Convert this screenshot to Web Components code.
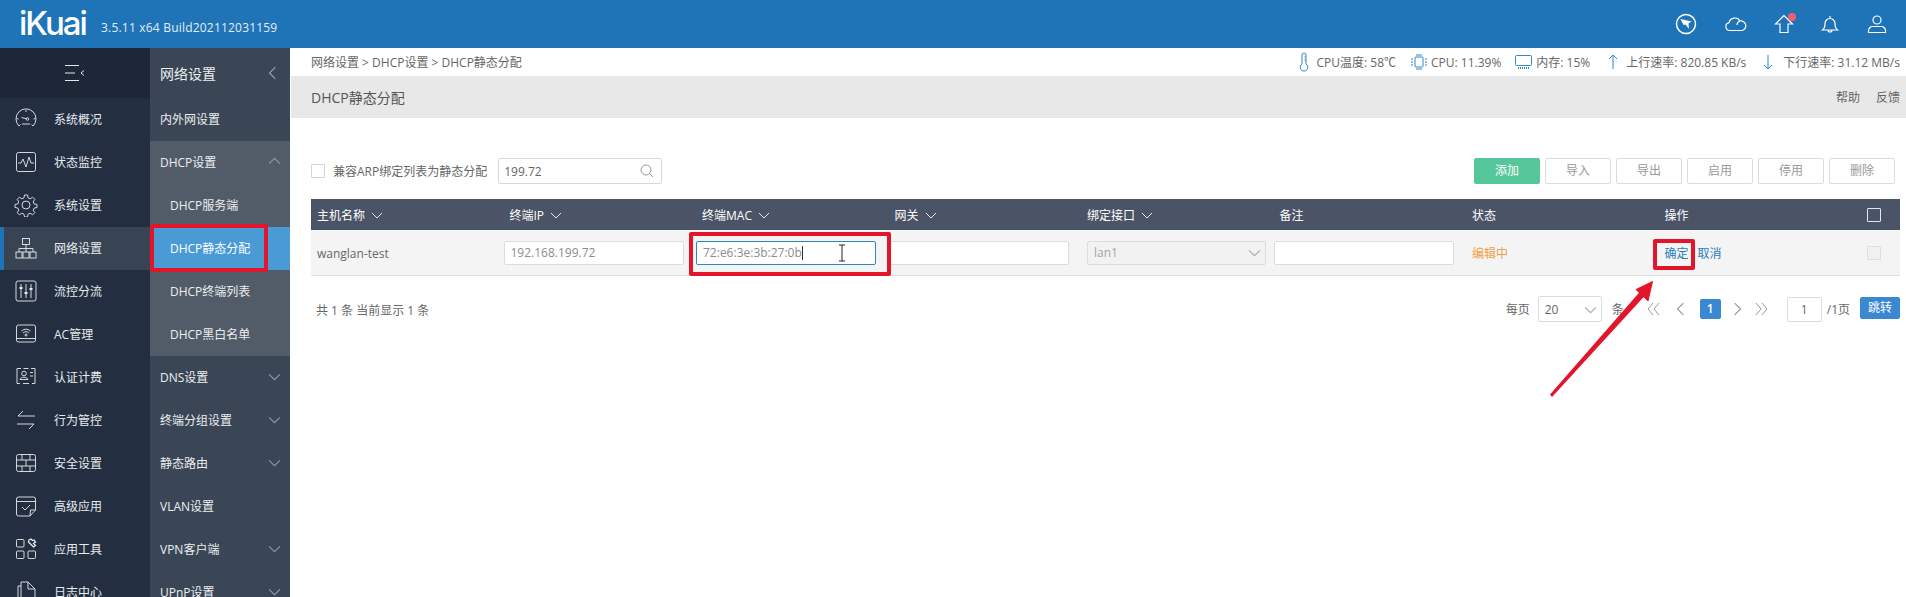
<!DOCTYPE html>
<html lang="zh">
<head>
<meta charset="utf-8">
<title>iKuai</title>
<style>
  html, body { margin: 0; height: 597px; overflow: hidden; background: #fff; }
  body { font: 12px "Open Sans", "Noto Sans CJK SC", sans-serif; color: #666; }
</style>
</head>
<body>
<ik-app>
  <ik-topbar version="3.5.11 x64 Build202112031159"></ik-topbar>
  <ik-sidenav></ik-sidenav>
  <ik-subnav></ik-subnav>
  <ik-main>
    <ik-status></ik-status>
    <ik-title>DHCP静态分配</ik-title>
    <ik-toolbar></ik-toolbar>
    <ik-table></ik-table>
    <ik-pager></ik-pager>
  </ik-main>
  <ik-mark style="left:150px;top:224px;width:118px;height:48px"></ik-mark>
  <ik-mark style="left:689px;top:232px;width:202px;height:44px"></ik-mark>
  <ik-mark style="left:1653px;top:239px;width:42px;height:31px"></ik-mark>
  <ik-arrow></ik-arrow>
</ik-app>

<script>
const chevron = (dir, size = 12, color = "currentColor") => {
  const d = { down: "M1 4l5 5 5-5", up: "M1 8l5-5 5 5", left: "M8 1L3 6l5 5", right: "M4 1l5 5-5 5" }[dir];
  return `<svg width="${size}" height="${size}" viewBox="0 0 12 12" fill="none" stroke="${color}" stroke-width="1"><path d="${d}"/></svg>`;
};

const NAV_ICONS = {
  gauge: `<path d="M5 19A10 10 0 1 1 19 19M5 19l1.500-1.500M19 19l-1.500-1.500M2.500 11.500l2 .5M21.500 11.500l-2 .5M12 3v2M8 17h8"/><circle cx="13.500" cy="12" r="1.300"/><path d="M7.500 10.500l4.800 1.200"/>`,
  pulse: `<rect x="2.500" y="2.500" width="19" height="19" rx="2"/><path d="M4 13h3l2-4 3 8 3-10 2 6h3"/>`,
  gear: `<circle cx="12" cy="12" r="4"/><path d="M10.500 2h3l.6 2.900 2 .9 2.500-1.600 2.200 2.200-1.600 2.500.9 2 2.900.6v3l-2.900.6-.9 2 1.600 2.500-2.200 2.200-2.500-1.600-2 .9-.6 2.900h-3l-.6-2.900-2-.9-2.500 1.600-2.200-2.200 1.600-2.500-.9-2-2.900-.6v-3l2.900-.6.9-2-1.600-2.500 2.200-2.200 2.500 1.600 2-.9z"/>`,
  tree: `<rect x="8.500" y="2.500" width="7" height="6"/><rect x="2" y="16" width="6" height="6"/><rect x="9" y="16" width="6" height="6"/><rect x="16" y="16" width="6" height="6"/><path d="M12 8.500V16M5 16v-3.500h14V16"/>`,
  sliders: `<rect x="2" y="2" width="20" height="20" rx="2"/><path d="M7 5v14M12 5v14M17 5v14"/><path d="M5.500 9h3M10.500 14h3M15.500 10h3" stroke-width="2"/>`,
  wifi: `<rect x="2.500" y="3" width="19" height="17" rx="2"/><path d="M2.500 16.500h19M7.500 9a6.500 6.500 0 0 1 9 0M9 11a4 4 0 0 1 6 0"/><circle cx="12" cy="13" r="1"/>`,
  card: `<path d="M7 3.500H3v15h3M9 18.500h6M18 18.500h3v-15h-4M9.500 3.500h5"/><circle cx="10" cy="8.500" r="2.300"/><path d="M6 14.500c.5-3 7-3 8 0h-8zM16 7.500h3M16 11h3"/>`,
  swap: `<path d="M21 8H4l5-5M3 16h17l-5 5"/>`,
  wall: `<rect x="2.500" y="3.500" width="19" height="17" rx="2"/><path d="M2.500 9h19M2.500 15h19M8 3.500V9M16 3.500V9M12 9v6M8 15v5.500M16 15v5.500"/>`,
  task: `<path d="M21.500 16V5a2 2 0 0 0-2-2h-15a2 2 0 0 0-2 2v15a2 2 0 0 0 2 2H16zM2.500 7.500h19M16 22l.5-6h5M8 13l3 3 5-5"/>`,
  tools: `<rect x="2.500" y="2.500" width="7.500" height="7.500" rx="1"/><rect x="2.500" y="14" width="7.500" height="7.500" rx="1"/><rect x="14" y="14" width="7.500" height="7.500" rx="1"/><path d="M15 3l2-1 1.500 1.500L20 3l1.500 2-2 1.500 2 2-2 1.500-3.500-3.500-1.500-1.500z" stroke-width="1.300"/>`,
  file: `<path d="M14 2H7v20h14V9zM14 2v7h7M7 6H4v18"/>`
};

class IkApp extends HTMLElement {
  constructor() {
    super();
    this.attachShadow({ mode: "open" });
    this.shadowRoot.innerHTML = `
      <style>
        :host { display: grid; position: relative; grid-template: 48px 549px / 150px 140px 1616px; width: 1906px; height: 597px; overflow: hidden; }
        ::slotted(ik-topbar) { grid-column: 1 / 4; }
      </style>
      <slot></slot>`;
  }
}

class IkTopbar extends HTMLElement {
  constructor() {
    super();
    this.attachShadow({ mode: "open" });
    this.shadowRoot.innerHTML = `
      <style>
        :host { display: flex; align-items: center; background: #1e74b6; color: #fff; }
        .logo { font: 500 33px/34px Inter, sans-serif; margin: -2px 0 0 19px; letter-spacing: -2px; width: 70px; }
        .ver { font-size: 12px; letter-spacing: .2px; margin: 6px 0 0 12px; color: #e4eef7; }
        .icons { margin-left: auto; display: flex; padding-right: 17px; align-items: center; }
        svg { display: block; width: 24px; height: 24px; fill: none; stroke: #fff; stroke-width: 1.200; }
        .home { position: relative; margin: 0 22px 0 24px; }
        .dot { position: absolute; right: 0; top: 1px; width: 8px; height: 8px; border-radius: 50%; background: #f2606c; }
      </style>
      <div class="logo">iKuai</div>
      <div class="ver"></div>
      <div class="icons">
        <svg viewBox="0 0 24 24" style="margin-right:26px;stroke-width:1.500"><circle cx="12" cy="12" r="9.500"/><path d="M6.500 7l11 2.500-3 2 .5 5.500-3.500-4.500-2 .5z" fill="#fff" stroke="none"/></svg>
        <svg viewBox="0 0 24 24"><path d="M6 18.500a4 4 0 0 1-1-7.900A6 6 0 0 1 16 9a4.800 4.800 0 0 1 2 9.500zM16 9c-1.500.5-3 2-3 4"/></svg>
        <div class="home">
          <svg viewBox="0 0 24 24"><path d="M12 3.500L3.500 12H8v8.500h8V12h4.500z"/></svg>
          <span class="dot"></span>
        </div>
        <svg viewBox="0 0 24 24" style="margin-right:23px"><path d="M4.500 18h15c-2-1.500-2.500-3-2.500-6.500a5 5 0 0 0-10 0C7 15 6.500 16.500 4.500 18zM12 6.500V4M10 18a2 2 0 0 0 4 0"/></svg>
        <svg viewBox="0 0 24 24"><circle cx="12" cy="8" r="4"/><path d="M3.500 20.500v-2c0-2 2-4 4-4h9c2 0 4 2 4 4v2z"/></svg>
      </div>`;
    this.shadowRoot.querySelector(".ver").textContent = this.getAttribute("version");
  }
}

class IkSidenav extends HTMLElement {
  constructor() {
    super();
    this.attachShadow({ mode: "open" });
    const items = [
      ["gauge", "系统概况"], ["pulse", "状态监控"], ["gear", "系统设置"], ["tree", "网络设置", true],
      ["sliders", "流控分流"], ["wifi", "AC管理"], ["card", "认证计费"], ["swap", "行为管控"],
      ["wall", "安全设置"], ["task", "高级应用"], ["tools", "应用工具"], ["file", "日志中心"]
    ];
    this.shadowRoot.innerHTML = `
      <style>
        :host { display: block; background: #232f41; color: #e8ebee; overflow: hidden; }
        .toggle { height: 50px; background: #1d2737; display: flex; align-items: center; justify-content: center; }
        .toggle svg { display: block; }
        .row { box-sizing: border-box; height: 43px; display: flex; align-items: center; padding: 0 0 2px 14px; gap: 16px; }
        .row.on { background: #384454; box-shadow: inset 4px 0 0 #1e74b6; }
        .row svg { width: 24px; height: 24px; flex: none; fill: none; stroke: #e8ebee; stroke-width: .9; }
      </style>
      <div class="toggle">
        <svg width="22" height="18" fill="none" stroke="#e8ebee"><path d="M1 1.500h14M1 9h10M1 16.500h14M20 6.500L17 9l3 2.500"/></svg>
      </div>
      ${items.map(([icon, label, on]) => `
        <div class="row${on ? " on" : ""}"><svg viewBox="0 0 24 24">${NAV_ICONS[icon]}</svg><span>${label}</span></div>`).join("")}`;
  }
}

class IkSubnav extends HTMLElement {
  constructor() {
    super();
    this.attachShadow({ mode: "open" });
    const items = [
      ["内外网设置"], ["DHCP设置", "up", "open"],
      ["DHCP服务端", "", "sub"], ["DHCP静态分配", "", "sub on"], ["DHCP终端列表", "", "sub"], ["DHCP黑白名单", "", "sub"],
      ["DNS设置", "down"], ["终端分组设置", "down"], ["静态路由", "down"], ["VLAN设置"], ["VPN客户端", "down"], ["UPnP设置", "down"]
    ];
    this.shadowRoot.innerHTML = `
      <style>
        :host { display: block; background: #3a4655; color: #eceef0; overflow: hidden; }
        .head { height: 50px; display: flex; align-items: center; justify-content: space-between; padding: 0 10px; font-size: 14px; }
        .row { box-sizing: border-box; height: 43px; display: flex; align-items: center; justify-content: space-between; padding: 0 9px 2px 10px; }
        .open, .sub { background: #525c69; }
        .sub { padding-left: 20px; }
        .on { background: #4a9ad6; color: #fff; }
        svg { display: block; }
      </style>
      <div class="head"><span>网络设置</span>${chevron("left", 14, "#98a1ab")}</div>
      ${items.map(([label, dir, cls]) => `
        <div class="row ${cls || ""}"><span>${label}</span>${dir ? chevron(dir, 13, "#8f99a4") : ""}</div>`).join("")}`;
  }
}

class IkMain extends HTMLElement {
  constructor() {
    super();
    this.attachShadow({ mode: "open" });
    this.shadowRoot.innerHTML = `
      <style>:host { display: flex; flex-direction: column; min-width: 0; background: #fff; }</style>
      <slot></slot>`;
  }
}

class IkStatus extends HTMLElement {
  constructor() {
    super();
    this.attachShadow({ mode: "open" });
    this.shadowRoot.innerHTML = `
      <style>
        :host { display: flex; align-items: center; justify-content: space-between; height: 28px; padding: 0 6px 0 21px; color: #666; }
        .stats { display: flex; align-items: center; }
        .stat { display: flex; align-items: center; gap: 4px; margin-left: 14px; }
        svg { display: block; fill: none; stroke: #2f86c9; stroke-width: 1; }
      </style>
      <div>网络设置 &gt; DHCP设置 &gt; DHCP静态分配</div>
      <div class="stats">
        <div class="stat" style="gap:8px"><svg width="10" height="20" viewBox="0 0 10 20"><path d="M3 3a2 2 0 0 1 4 0v9a3.800 3.800 0 1 1-4 0zM7 5H5.500M7 8H5.500"/></svg>CPU温度: 58℃</div>
        <div class="stat" style="gap:3px"><svg width="18" height="18" viewBox="0 0 18 18"><rect x="5" y="4" width="8" height="10" rx="1"/><path d="M1 6h2M1 9h2M1 12h2M15 6h2M15 9h2M15 12h2M7 1v2M9 1v2M11 1v2M7 15v2M9 15v2M11 15v2"/></svg>CPU: 11.39%</div>
        <div class="stat"><svg width="17" height="16" viewBox="0 0 17 16"><rect x=".5" y="1.500" width="16" height="10" rx="1"/><path d="M3 14h11" stroke-dasharray="1 1" stroke-width="2"/></svg>内存: 15%</div>
        <div class="stat" style="margin-left:18px;gap:8px"><svg width="10" height="16" viewBox="0 0 10 16"><path d="M5 15V1M1 5l4-4 4 4"/></svg>上行速率: 820.85 KB/s</div>
        <div class="stat" style="margin-left:17px;gap:10px"><svg width="10" height="16" viewBox="0 0 10 16"><path d="M5 1v14M1 11l4 4 4-4"/></svg>下行速率: 31.12 MB/s</div>
      </div>`;
  }
}

class IkTitle extends HTMLElement {
  constructor() {
    super();
    this.attachShadow({ mode: "open" });
    this.shadowRoot.innerHTML = `
      <style>
        :host { display: flex; align-items: center; justify-content: space-between; height: 42px; margin-left: 1px; padding: 0 6px 0 20px; background: #e8e8e8; color: #555; }
        .t { font-size: 14px; }
        .links { display: flex; gap: 16px; color: #666; }
      </style>
      <div class="t"><slot></slot></div>
      <div class="links"><span>帮助</span><span>反馈</span></div>`;
  }
}

class IkToolbar extends HTMLElement {
  constructor() {
    super();
    this.attachShadow({ mode: "open" });
    this.shadowRoot.innerHTML = `
      <style>
        :host { display: flex; align-items: center; height: 26px; margin: 40px 6px 0 21px; }
        .check { width: 12px; height: 12px; border: 1px solid #d4d4d4; border-radius: 1px; margin-right: 8px; }
        .search { display: flex; align-items: center; justify-content: space-between; box-sizing: border-box; width: 164px; height: 26px; margin-left: 11px; padding: 0 7px 0 5px; border: 1px solid #d8d8d8; border-radius: 2px; }
        .btns { display: flex; gap: 5px; margin-left: auto; padding-right: 5px; }
        .btn { box-sizing: border-box; width: 66px; height: 26px; line-height: 24px; text-align: center; border: 1px solid #dcdcdc; border-radius: 2px; color: #999; }
        .btn.add { background: #55c79b; border-color: #55c79b; color: #fff; }
        svg { display: block; fill: none; stroke: #999; }
      </style>
      <span class="check"></span>
      <span>兼容ARP绑定列表为静态分配</span>
      <div class="search"><span>199.72</span><svg width="14" height="14"><circle cx="6" cy="6" r="5"/><path d="M9.500 9.500L13 13"/></svg></div>
      <div class="btns">
        <span class="btn add">添加</span><span class="btn">导入</span><span class="btn">导出</span><span class="btn">启用</span><span class="btn">停用</span><span class="btn">删除</span>
      </div>`;
  }
}

class IkTable extends HTMLElement {
  constructor() {
    super();
    this.attachShadow({ mode: "open" });
    const heads = [["主机名称", 1], ["终端IP", 1], ["终端MAC", 1], ["网关", 1], ["绑定接口", 1], ["备注"], ["状态"], ["操作"]];
    this.shadowRoot.innerHTML = `
      <style>
        :host { display: block; margin: 15px 6px 0 21px; }
        .head, .row { display: grid; grid-template-columns: repeat(8, 192.500px) 49px; align-items: center; }
        .head { height: 31px; background: #4b5367; color: #fff; }
        .head > div { padding-left: 6px; display: flex; align-items: center; gap: 6px; }
        .row { height: 45px; background: #f4f4f4; border-bottom: 1px solid #dedede; }
        .row .txt { padding: 2px 0 0 6px; }
        .field { box-sizing: border-box; width: 180px; height: 24px; line-height: 22px; padding-left: 6px; background: #fff; border: 1px solid #dcdcdc; border-radius: 2px; color: #8c8c8c; }
        .field.focus { border-color: #2f86b8; }
        .caret { display: inline-block; width: 1px; height: 14px; background: #333; vertical-align: -3px; }
        .select { display: flex; align-items: center; justify-content: space-between; width: 179px; margin-left: 6px; padding-right: 4px; background: #f2f2f2; color: #a5a5a5; }
        .ops { padding-left: 6px; display: flex; gap: 9px; color: #2a7db8; }
        .edit { padding-left: 6px; color: #f0a044; }
        .box { width: 12px; height: 12px; border-radius: 1px; justify-self: start; margin-left: 16px; }
        .head .box { width: 12px; height: 12px; padding: 0; border: 1px solid #e4e6ea; }
        .row .box { border: 1px solid #dedede; background: #f0f0f0; }
        svg { display: block; }
      </style>
      <div class="head">
        ${heads.map(([t, c]) => `<div><span>${t}</span>${c ? chevron("down", 12, "#e8e8e8") : ""}</div>`).join("")}
        <div class="box"></div>
      </div>
      <div class="row">
        <div class="txt">wanglan-test</div>
        <div class="field">192.168.199.72</div>
        <div class="field focus">72:e6:3e:3b:27:0b<span class="caret"></span></div>
        <div class="field"></div>
        <div class="field select"><span>lan1</span>${chevron("down", 13, "#aaa")}</div>
        <div class="field"></div>
        <div class="edit">编辑中</div>
        <div class="ops"><span>确定</span><span>取消</span></div>
        <div class="box"></div>
      </div>`;
  }
}

class IkPager extends HTMLElement {
  constructor() {
    super();
    this.attachShadow({ mode: "open" });
    const dbl = (d) => `<svg width="13" height="14" viewBox="0 0 13 14" fill="none" stroke="#999"><path d="${d}"/></svg>`;
    this.shadowRoot.innerHTML = `
      <style>
        :host { display: flex; align-items: flex-start; justify-content: space-between; margin: 20px 6px 0 21px; color: #666; }
        .sum { margin: 5px 0 0 5px; }
        .r { display: flex; align-items: center; }
        .sel { display: flex; align-items: center; justify-content: space-between; box-sizing: border-box; width: 64px; height: 26px; margin: 0 10px 0 8px; padding: 0 4px 0 6px; border: 1px solid #dcdcdc; border-radius: 2px; }
        .cur { width: 21px; height: 20px; line-height: 20px; text-align: center; background: #3a87d2; color: #fff; border-radius: 2px; font-weight: 600; }
        .num { box-sizing: border-box; width: 35px; height: 25px; line-height: 23px; text-align: center; border: 1px solid #dcdcdc; border-radius: 2px; margin: 0 5px 0 19px; }
        .go { width: 40px; height: 22px; line-height: 22px; margin: 0 0 3px 10px; text-align: center; background: #3a87d2; color: #fff; border-radius: 2px; }
        svg { display: block; }
      </style>
      <div class="sum">共 1 条 当前显示 1 条</div>
      <div class="r">
        <span>每页</span>
        <div class="sel"><span>20</span>${chevron("down", 13, "#aaa")}</div>
        <span>条</span>
        <span style="margin-left:23px">${dbl("M6 1L1 7l5 6M12 1L7 7l5 6")}</span>
        <span style="margin-left:14px">${chevron("left", 14, "#999")}</span>
        <span class="cur" style="margin-left:12px">1</span>
        <span style="margin-left:9px">${chevron("right", 14, "#999")}</span>
        <span style="margin-left:11px">${dbl("M1 1l5 6-5 6M7 1l5 6-5 6")}</span>
        <span class="num">1</span>
        <span>/1页</span>
        <span class="go">跳转</span>
      </div>`;
  }
}

class IkMark extends HTMLElement {
  constructor() {
    super();
    this.attachShadow({ mode: "open" });
    this.shadowRoot.innerHTML = `
      <style>:host { display: block; position: absolute; box-sizing: border-box; border: 4px solid #e3152b; border-radius: 2px; }</style>`;
  }
}

// annotation arrow and i-beam cursor sit on top of the page
class IkArrow extends HTMLElement {
  constructor() {
    super();
    this.attachShadow({ mode: "open" });
    this.shadowRoot.innerHTML = `
      <style>
        :host { display: block; position: absolute; inset: 0; pointer-events: none; }
        svg { position: absolute; left: 0; top: 0; }
      </style>
      <svg width="1906" height="597" fill="none">
        <path d="M1550 394.500L1552 397 1645.500 295 1641 290.500z" fill="#e3152b"/>
        <path d="M1652.500 281.500L1636 289.500 1648 301z" fill="#e3152b" stroke="#e3152b"/>
        <path d="M839 245h6M842 245v16M839 261h6" stroke="#222" stroke-width="1"/>
      </svg>`;
  }
}

customElements.define("ik-app", IkApp);
customElements.define("ik-topbar", IkTopbar);
customElements.define("ik-sidenav", IkSidenav);
customElements.define("ik-subnav", IkSubnav);
customElements.define("ik-main", IkMain);
customElements.define("ik-status", IkStatus);
customElements.define("ik-title", IkTitle);
customElements.define("ik-toolbar", IkToolbar);
customElements.define("ik-table", IkTable);
customElements.define("ik-pager", IkPager);
customElements.define("ik-mark", IkMark);
customElements.define("ik-arrow", IkArrow);
</script>
</body>
</html>
